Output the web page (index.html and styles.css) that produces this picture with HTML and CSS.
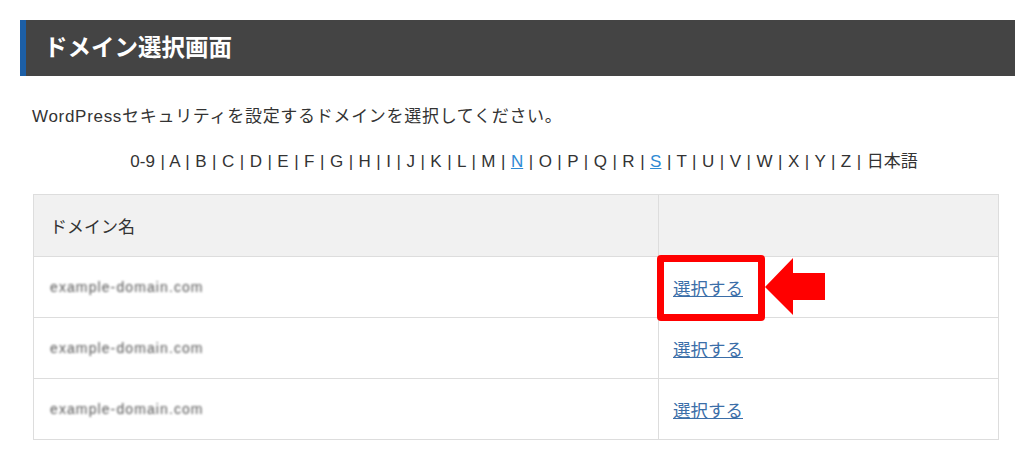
FILE: index.html
```html
<!DOCTYPE html>
<html lang="ja">
<head>
<meta charset="utf-8">
<title>ドメイン選択画面</title>
<link rel="stylesheet" href="styles.css">
</head>
<body>
<div class="page">
  <h1 class="title">ドメイン選択画面</h1>
  <p class="lead">WordPressセキュリティを設定するドメインを選択してください。</p>
  <div class="alpha">0-9 | A | B | C | D | E | F | G | H | I | J | K | L | M | <a href="#">N</a> | O | P | Q | R | <a href="#">S</a> | T | U | V | W | X | Y | Z | 日本語</div>
  <table class="domains">
    <thead>
      <tr><th class="col-name">ドメイン名</th><th class="col-action"></th></tr>
    </thead>
    <tbody>
      <tr>
        <td><span class="blur">example-domain.com</span></td>
        <td class="action-cell">
          <a href="#">選択する</a>
          <span class="highlight"></span>
          <svg class="arrow" width="60" height="57" viewBox="0 0 60 57"><polygon points="0,29 28,0 28,15 60,15 60,42 28,42 28,57" fill="#ff0000"/></svg>
        </td>
      </tr>
      <tr>
        <td><span class="blur">example-domain.com</span></td>
        <td class="action-cell"><a href="#">選択する</a></td>
      </tr>
      <tr>
        <td><span class="blur">example-domain.com</span></td>
        <td class="action-cell"><a href="#">選択する</a></td>
      </tr>
    </tbody>
  </table>
</div>
</body>
</html>
```
FILE: styles.css
```css
html, body {
  margin: 0;
  padding: 0;
  background: #fff;
}
body {
  font-family: "Liberation Sans", "Noto Sans CJK JP", sans-serif;
  color: #333;
  font-size: 17px;
}
.page {
  padding: 20px 9px 0 20px;
}
.title {
  margin: 0;
  height: 56px;
  box-sizing: border-box;
  background: #444;
  border-left: 6px solid #1d5fa6;
  color: #fff;
  font-size: 23.5px;
  font-weight: bold;
  line-height: 56px;
  padding-left: 18px;
}
.lead {
  margin: 28px 0 0 12px;
  line-height: 26px;
  letter-spacing: 0.7px;
}
.alpha {
  margin: 19px 0 0 0;
  padding-left: 13px;
  text-align: center;
  line-height: 26px;
  word-spacing: 0.78px;
}
.alpha a {
  color: #2f8ad4;
}
.domains {
  margin: 19px 0 0 13px;
  width: 966px;
  border-collapse: collapse;
}
.domains th, .domains td {
  border: 1px solid #ddd;
  height: 60px;
  padding: 0 0 0 16px;
  text-align: left;
  font-weight: normal;
  vertical-align: middle;
}
.domains thead th {
  background: #f1f1f1;
  height: 61px;
}
.col-name {
  width: 608px;
}
.domains td.action-cell {
  padding-left: 14px;
  position: relative;
}
.action-cell a {
  color: #3b6ea8;
  font-size: 17.5px;
}
.blur {
  font-size: 14px;
  color: #555;
  filter: blur(1.2px);
  letter-spacing: 1.1px;
}
.highlight {
  position: absolute;
  left: -2px;
  top: -2px;
  width: 108px;
  height: 66px;
  box-sizing: border-box;
  border: 7px solid #ff0000;
  border-radius: 4px;
}
.arrow {
  position: absolute;
  left: 106px;
  top: 1px;
}
```
